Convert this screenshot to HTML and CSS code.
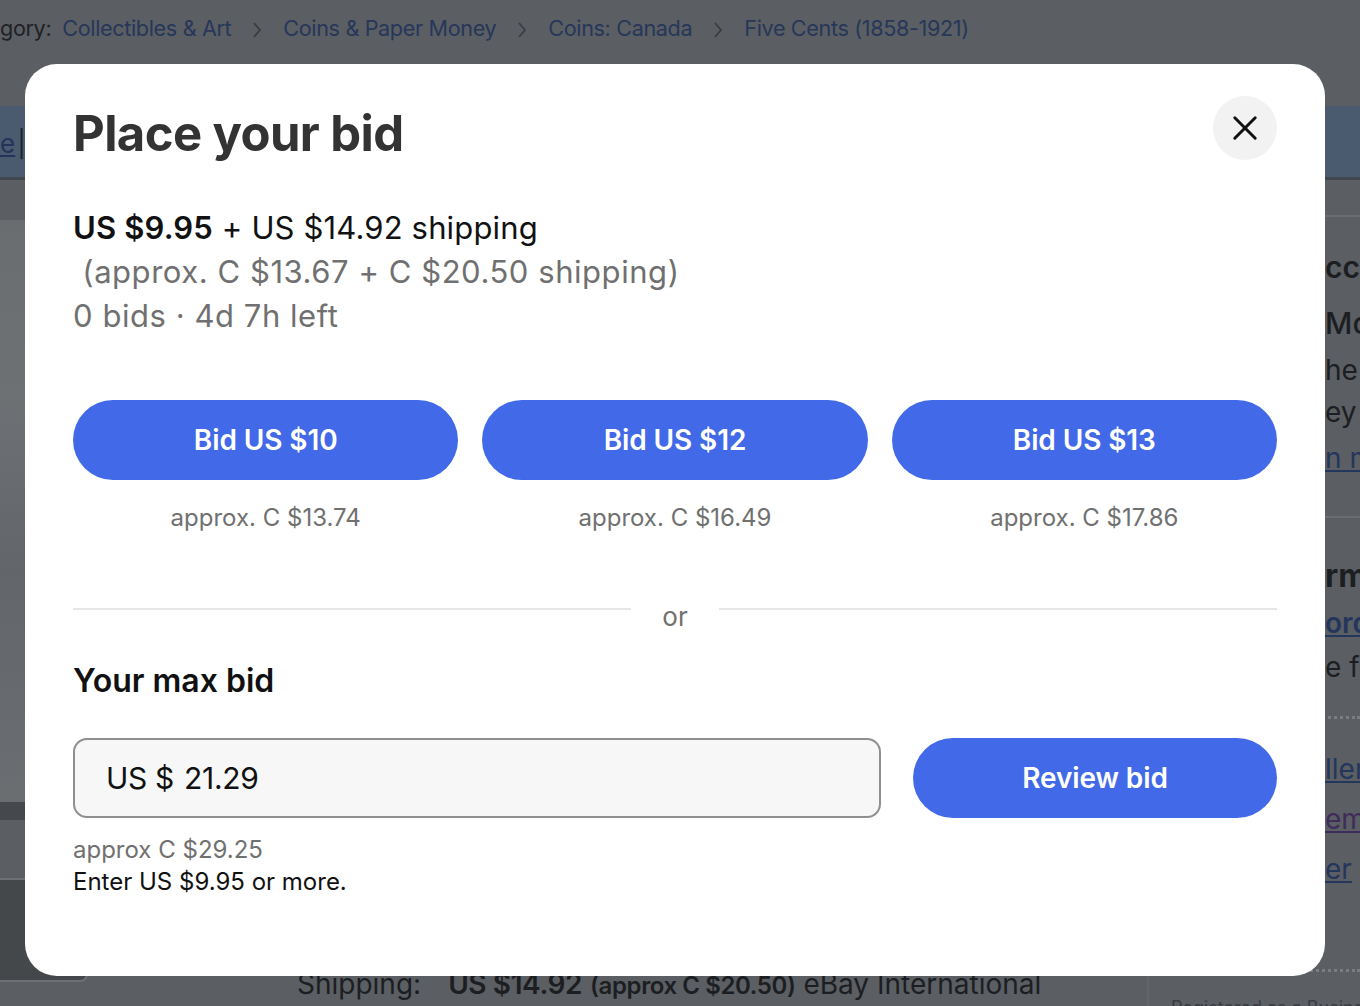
FILE: index.html
```html
<!DOCTYPE html>
<html lang="en">
<head>
<meta charset="utf-8">
<title>Place your bid</title>
<link rel="stylesheet" href="styles.css">
</head>
<body>
<div class="page">
  <div class="crumbs">
    <span class="crumb-label">gory:</span>
    <a class="crumb">Collectibles &amp; Art</a><svg class="chev" width="10" height="18" viewBox="0 0 10 18"><path d="M2 2 L8 9 L2 16" stroke="#3a3d42" stroke-width="1.8" fill="none"/></svg>
    <a class="crumb">Coins &amp; Paper Money</a><svg class="chev" width="10" height="18" viewBox="0 0 10 18"><path d="M2 2 L8 9 L2 16" stroke="#3a3d42" stroke-width="1.8" fill="none"/></svg>
    <a class="crumb">Coins: Canada</a><svg class="chev" width="10" height="18" viewBox="0 0 10 18"><path d="M2 2 L8 9 L2 16" stroke="#3a3d42" stroke-width="1.8" fill="none"/></svg>
    <a class="crumb">Five Cents (1858-1921)</a>
  </div>
  <div class="band"><span class="band-link">e</span><span class="band-bar">|</span></div>
  <div class="main">
    <div class="gallery">
      <div class="photo"></div>
      <div class="thumb"></div>
    </div>
    <div class="center">
      <div class="ship-line"><span class="ship-label">Shipping:</span><b>US $14.92</b> <b class="small">(approx C $20.50)</b> eBay International</div>
    </div>
    <div class="side">
      <div class="side-rule"></div>
      <div class="frag side-h">cc</div>
      <div class="frag side-h2">Mo</div>
      <div class="frag side-t">he</div>
      <div class="frag side-t">ey l</div>
      <div class="frag side-link">n m</div>
      <div class="side-rule r2"></div>
      <div class="frag side-h3">rm</div>
      <div class="frag side-link bold">ord</div>
      <div class="frag side-t">e fe</div>
      <div class="side-dots"></div>
      <div class="frag side-link">ller</div>
      <div class="frag side-link purple">ems</div>
      <div class="frag side-link">er</div>
      <div class="side-dots d2"></div>
      <div class="side-small">Registered as a Business</div>
    </div>
  </div>
</div>

<div class="overlay">
  <div class="modal" role="dialog" aria-label="Place your bid">
    <div class="modal-head">
      <h1 class="title">Place your bid</h1>
      <button class="close" aria-label="Close">
        <svg width="28" height="28" viewBox="0 0 28 28"><path d="M3 3 L25 25 M25 3 L3 25" stroke="#111" stroke-width="3.2" stroke-linecap="round" fill="none"/></svg>
      </button>
    </div>
    <div class="price">
      <div class="price-main"><b>US $9.95</b> + US $14.92 shipping</div>
      <div class="price-sub">&nbsp;(approx. C $13.67 + C $20.50 shipping)</div>
      <div class="price-sub">0 bids · 4d 7h left</div>
    </div>
    <div class="quick">
      <div class="quick-item">
        <button class="btn">Bid US $10</button>
        <div class="approx">approx. C $13.74</div>
      </div>
      <div class="quick-item">
        <button class="btn">Bid US $12</button>
        <div class="approx">approx. C $16.49</div>
      </div>
      <div class="quick-item">
        <button class="btn">Bid US $13</button>
        <div class="approx">approx. C $17.86</div>
      </div>
    </div>
    <div class="divider">
      <span class="div-line"></span>
      <span class="div-text">or</span>
      <span class="div-line"></span>
    </div>
    <h2 class="max-title">Your max bid</h2>
    <div class="max-row">
      <div class="field"><span class="field-prefix">US $</span><span class="field-value">21.29</span></div>
      <button class="btn review">Review bid</button>
    </div>
    <div class="hint-gray">approx C $29.25</div>
    <div class="hint">Enter US $9.95 or more.</div>
  </div>
</div>
</body>
</html>
```

FILE: styles.css
```css
* { box-sizing: border-box; }
html, body { margin: 0; padding: 0; }
body {
  width: 1360px;
  height: 1006px;
  overflow: hidden;
  background: #5b5e63;
  font-family: Inter, "Open Sans", "Liberation Sans", sans-serif;
  color: #111;
}

/* ---------- dimmed page behind ---------- */
.page { width: 1360px; height: 1006px; overflow: hidden; }
.crumbs {
  height: 106px;
  padding-top: 15px;
  font-size: 21.6px;
  letter-spacing: -0.35px;
  white-space: nowrap;
  color: #1f2125;
  display: flex;
  align-items: flex-start;
}
.crumb-label { margin-right: 11px; }
.crumb { color: #26375a; }
.chev { margin: 6px 21px 0 21px; flex: none; }
.band {
  height: 74px;
  background: #4a5b6f;
  border-bottom: 3px solid #41474f;
  padding-top: 22px;
  font-size: 26px;
  color: #22345a;
}
.band-link { text-decoration: underline; }
.band-bar { margin-left: 2px; color: #1e2530; }
.main { display: flex; height: 826px; }
.gallery { width: 88px; padding-top: 40px; display: flex; flex-direction: column; }
.photo {
  height: 600px;
  background: linear-gradient(180deg, #6a6d70 0%, #6e7174 30%, #62656a 60%, #6b6e71 100%);
  border-bottom: 18px solid #45484c;
}
.thumb {
  height: 104px;
  margin-top: 58px;
  border: 2px solid #6d7074;
  border-left: none;
  border-radius: 0 8px 8px 0;
  background: #45484b;
}
.center { flex: 1; display: flex; align-items: flex-end; padding-left: 209px; padding-bottom: 5px; }
.ship-line { font-size: 28px; color: #1c1e22; white-space: nowrap; }
.ship-line b { font-weight: 600; letter-spacing: -0.4px; }
.ship-label { margin-right: 27px; }
.ship-line .small { font-size: 24px; }
.side {
  width: 213px;
  overflow: hidden;
  white-space: nowrap;
  border-left: 2px solid #63666b;
  color: #1c1e22;
  padding-top: 35px;
}
.frag { padding-left: 176px; }
.side-rule { height: 2px; background: #6a6d72; margin-bottom: 30px; }
.side-rule.r2 { margin: 33px 0 36px; }
.side-h { font-size: 30px; font-weight: 600; line-height: 40px; }
.side-h2 { font-size: 30px; font-weight: 500; line-height: 52px; margin-top: 10px; }
.side-h3 { font-size: 32px; font-weight: 700; line-height: 44px; }
.side-t { font-size: 28px; line-height: 42px; }
.side-link { font-size: 28px; line-height: 50px; color: #24365c; text-decoration: underline; }
.side-link.bold { font-weight: 600; line-height: 46px; margin-top: 2px; }
.side-link.purple { color: #3f2b5c; }
.side-dots { border-top: 3px dotted #7a7d82; margin: 28px 0 25px; }
.side-dots.d2 { margin: 75px 0 0; }
.side-small { font-size: 18px; color: #3a3d42; margin-top: 25px; padding-left: 22px; }

/* ---------- modal ---------- */
.overlay {
  position: fixed;
  inset: 0;
  padding: 64px 0 0 25px;
}
.modal {
  width: 1300px;
  height: 912px;
  background: #fff;
  border-radius: 32px;
  padding: 32px 48px 0 48px;
}
.modal-head { display: flex; justify-content: space-between; align-items: flex-start; }
.title {
  margin: 10px 0 0 0;
  font-size: 49px;
  line-height: 56px;
  font-weight: 700;
  color: #333;
  letter-spacing: -0.6px;
}
.close {
  width: 64px;
  height: 64px;
  border-radius: 50%;
  border: none;
  background: #f2f2f2;
  display: flex;
  align-items: center;
  justify-content: center;
  padding: 0;
}
.close svg { width: 26px; height: 26px; }

.price { margin-top: 44px; }
.price-main, .price-sub { font-size: 31px; line-height: 44px; }
.price-main { color: #111; letter-spacing: 0.15px; }
.price-main b { font-weight: 600; }
.price-sub { color: #707070; letter-spacing: 0.55px; }

.quick { display: flex; gap: 24px; margin-top: 62px; }
.quick-item { flex: 1; display: flex; flex-direction: column; align-items: center; }
.btn {
  width: 100%;
  height: 80px;
  border: none;
  border-radius: 40px;
  background: #4169e8;
  color: #fff;
  font-family: inherit;
  font-size: 28px;
  font-weight: 600;
  letter-spacing: -0.1px;
}
.approx {
  margin-top: 22px;
  font-size: 24px;
  line-height: 32px;
  color: #707070;
}

.divider { display: flex; align-items: flex-start; margin-top: 67px; }
.div-line { flex: 1; height: 2px; background: #e5e5e5; margin-top: 7px; }
.div-text {
  width: 88px;
  text-align: center;
  font-size: 26px;
  line-height: 32px;
  color: #707070;
}

.max-title {
  margin: 28px 0 0 0;
  font-size: 32px;
  line-height: 40px;
  font-weight: 600;
  color: #111;
  letter-spacing: 0;
}
.max-row { display: flex; gap: 32px; margin-top: 37px; }
.field {
  width: 808px;
  height: 80px;
  border: 2px solid #8f8f8f;
  border-radius: 14px;
  background: #f7f7f7;
  display: flex;
  align-items: center;
  padding-left: 31px;
  font-size: 30px;
  color: #111;
  letter-spacing: -0.3px;
}
.field-prefix { margin-right: 10px; }
.btn.review { flex: 1; width: auto; }
.hint-gray {
  margin-top: 16px;
  font-size: 24px;
  line-height: 32px;
  color: #707070;
}
.hint {
  font-size: 24px;
  line-height: 32px;
  color: #111;
}
```
